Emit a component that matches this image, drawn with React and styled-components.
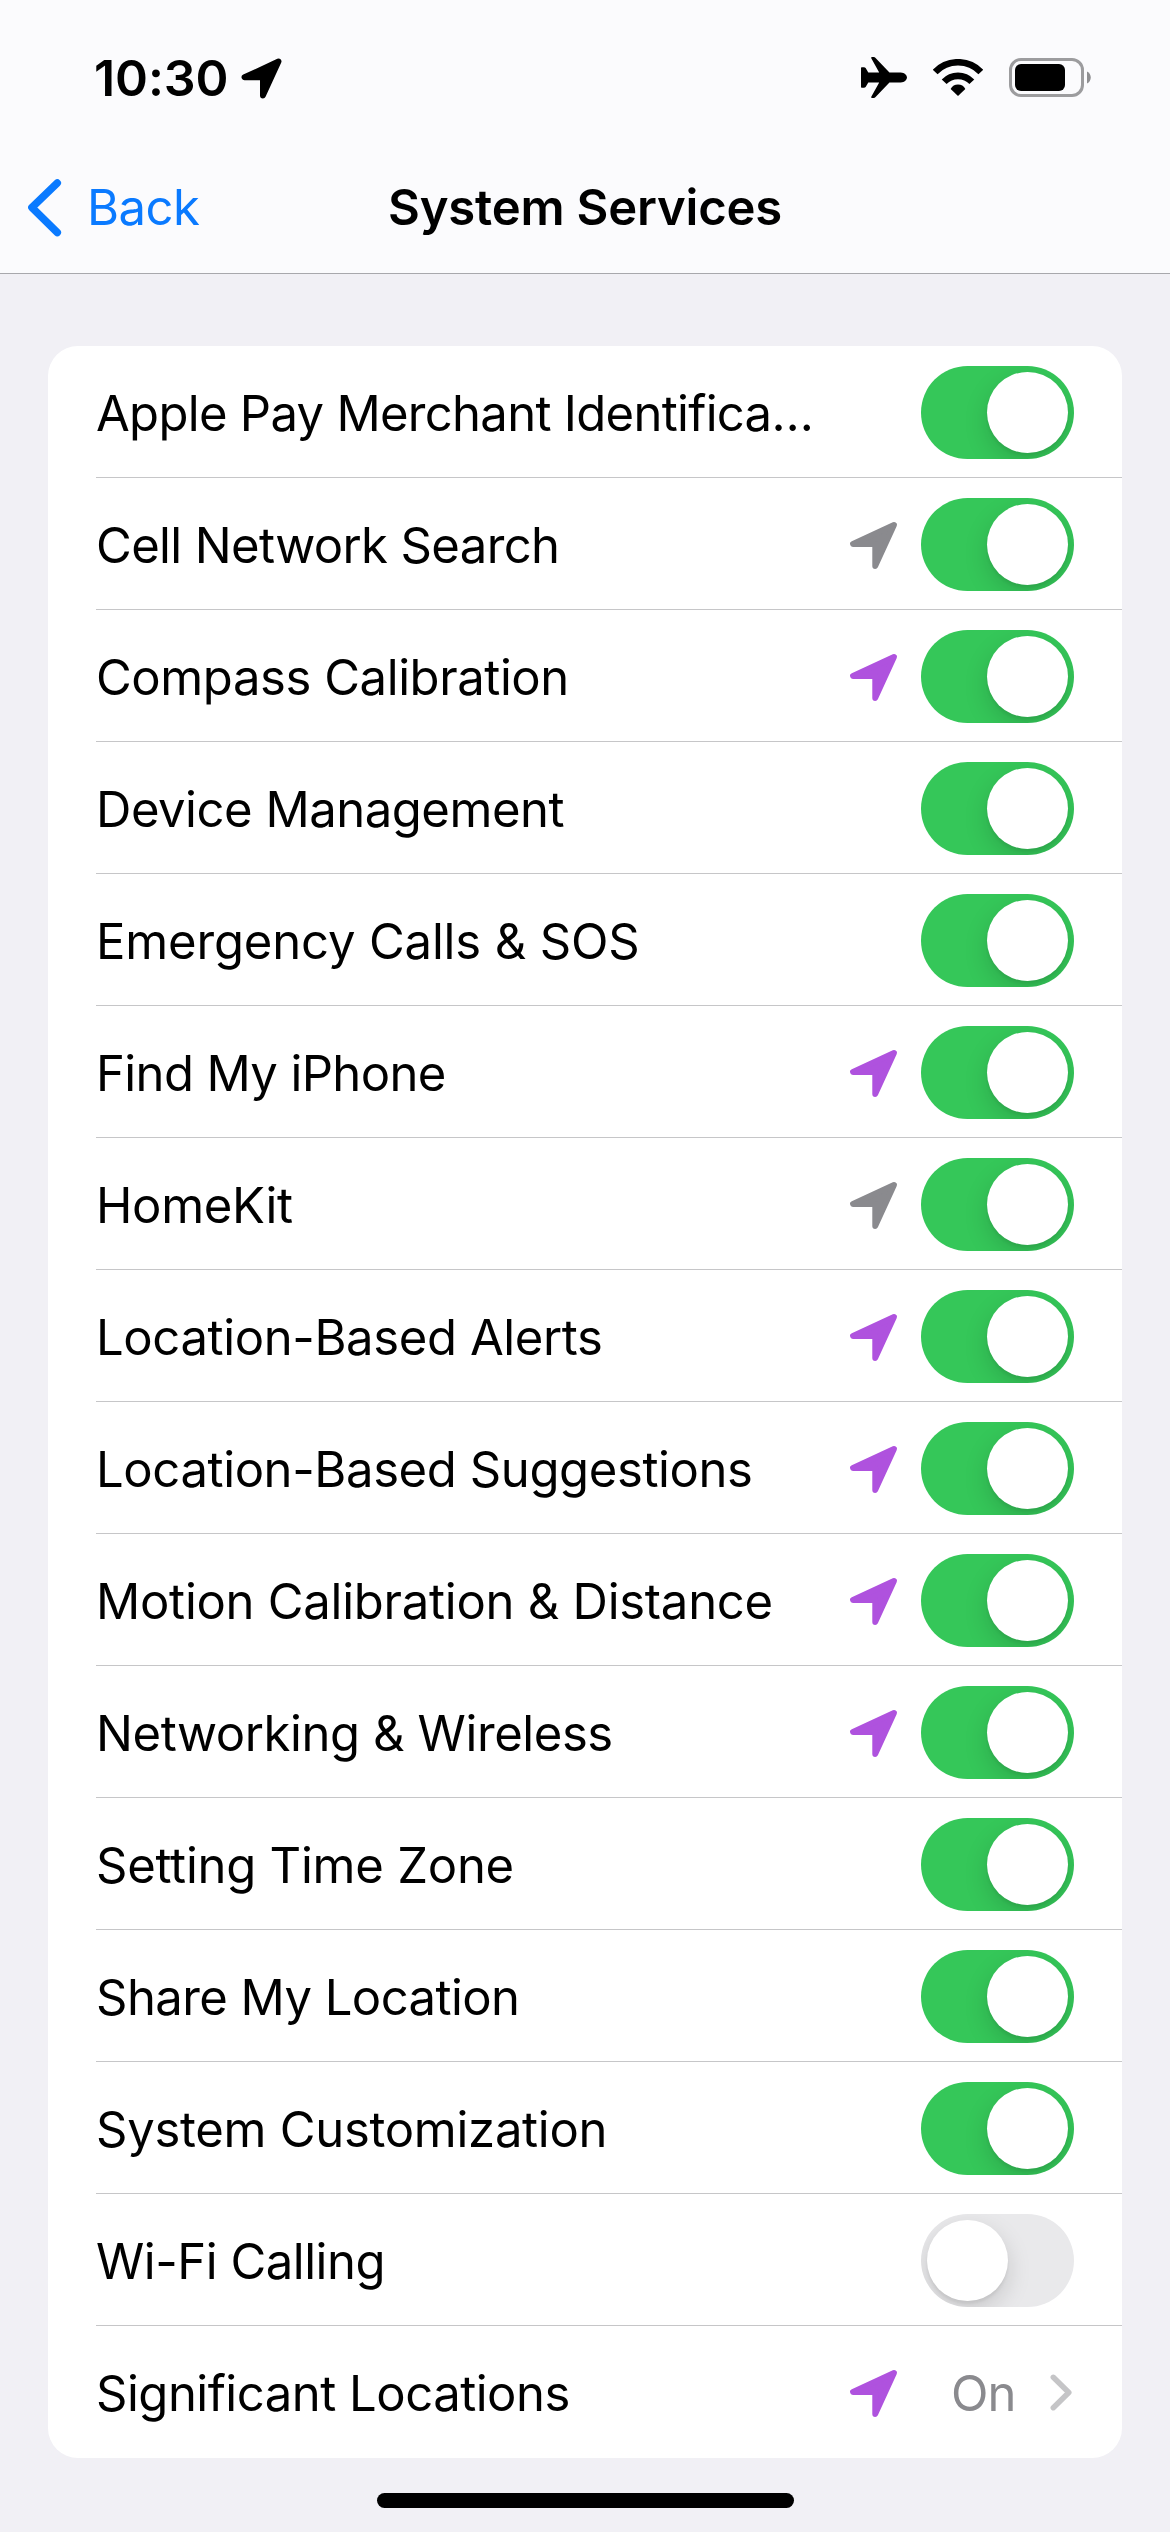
import { useState } from "react";
import styled, { createGlobalStyle } from "styled-components";

const GlobalStyle = createGlobalStyle`
    * {
        box-sizing: border-box;
    }

    body {
        margin: 0;
        background-color: #f1f0f5;
        font-family: Inter, "Liberation Sans", sans-serif;
        color: black;
    }
`;

const Screen = styled.div`
    width: 1170px;
    height: 2532px;
    display: flex;
    flex-direction: column;
    overflow: hidden;
`;

//top area: status bar + navigation bar
const Header = styled.header`
    height: 274px;
    background-color: #fbfbfd;
    border-bottom: 1px solid #a8a8ac;
`;

const StatusBar = styled.div`
    height: 141px;
    padding: 15px 79px 0 94px;
    display: flex;
    align-items: center;
    justify-content: space-between;
`;

const StatusGroup = styled.div`
    display: flex;
    align-items: center;
    gap: ${props => props.$gap}px;
`;

const StatusIcons = styled(StatusGroup)`
    padding-bottom: 1px;
`;

const Time = styled.span`
    font-size: 50px;
    font-weight: 600;
    line-height: 60px;
    letter-spacing: -0.1px;
`;

const NavBar = styled.nav`
    height: 132px;
    padding: 0 28px;
    display: grid;
    grid-template-columns: 1fr auto 1fr;
    align-items: center;
`;

const BackButton = styled.button`
    padding: 1px 0 0;
    border: none;
    background: none;
    display: flex;
    align-items: center;
    gap: 25px;
    font: inherit;
    font-size: 49px;
    line-height: 60px;
    letter-spacing: -0.5px;
    color: #0a7aff;
    cursor: pointer;
`;

const Title = styled.h1`
    margin: 0;
    padding-top: 1px;
    font-size: 49px;
    font-weight: 600;
    line-height: 60px;
    letter-spacing: -0.2px;
`;

const List = styled.ul`
    margin: 72px 48px 0;
    padding: 0;
    list-style: none;
    background-color: white;
    border-radius: 30px;
`;

const Row = styled.li`
    height: 132px;
    padding-left: 48px;
`;

const RowContent = styled.div`
    height: 100%;
    padding: 2px 48px 0 0;
    display: flex;
    align-items: center;
    border-bottom: 1px solid ${props => props.$last ? "transparent" : "#c6c6c8"};
`;

const Label = styled.span`
    flex: 1;
    padding-top: 2px;
    font-size: 49px;
    line-height: 60px;
    white-space: nowrap;
    letter-spacing: ${props => props.$spacing}px;
`;

const ArrowSlot = styled.span`
    display: flex;
    padding-top: 2px;
`;

const Toggle = styled.button`
    width: 153px;
    height: 93px;
    margin-left: 24px;
    padding: 6px;
    border: none;
    border-radius: 47px;
    overflow: hidden;
    display: flex;
    justify-content: ${props => props.$on ? "flex-end" : "flex-start"};
    background-color: ${props => props.$on ? "#35c759" : "#e9e9eb"};
    cursor: pointer;
`;

const Knob = styled.span`
    width: 81px;
    height: 81px;
    border-radius: 50%;
    background-color: white;
    box-shadow: 0 9px 24px rgba(0, 0, 0, 0.15), 0 3px 3px rgba(0, 0, 0, 0.06);
`;

//value and chevron on the right of a link row
const Detail = styled.div`
    width: 177px;
    padding: 0 2px 0 54px;
    display: flex;
    align-items: center;
    justify-content: space-between;
`;

const Value = styled.span`
    padding-top: 2px;
    color: #8a8a8e;
    font-size: 49px;
    line-height: 60px;
    letter-spacing: -1px;
`;

const HomeIndicator = styled.div`
    width: 417px;
    height: 15px;
    margin: 35px auto 0;
    border-radius: 8px;
    background-color: black;
`;


const PURPLE = "#af52de";
const GRAY = "#8a8a8e";

const services = [
    { name: "Apple Pay Merchant Identifica…", on: true, spacing: -0.7 },
    { name: "Cell Network Search", arrow: GRAY, on: true, spacing: -0.62 },
    { name: "Compass Calibration", arrow: PURPLE, on: true, spacing: -0.42 },
    { name: "Device Management", on: true, spacing: -0.47 },
    { name: "Emergency Calls & SOS", on: true, spacing: -0.16 },
    { name: "Find My iPhone", arrow: PURPLE, on: true, spacing: -0.62 },
    { name: "HomeKit", arrow: GRAY, on: true, spacing: -0.3 },
    { name: "Location-Based Alerts", arrow: PURPLE, on: true, spacing: -0.38 },
    { name: "Location-Based Suggestions", arrow: PURPLE, on: true, spacing: -0.39 },
    { name: "Motion Calibration & Distance", arrow: PURPLE, on: true, spacing: -0.26 },
    { name: "Networking & Wireless", arrow: PURPLE, on: true, spacing: -0.41 },
    { name: "Setting Time Zone", on: true, spacing: -0.24 },
    { name: "Share My Location", on: true, spacing: -0.56 },
    { name: "System Customization", on: true, spacing: -0.28 },
    { name: "Wi-Fi Calling", on: false, spacing: -0.47 },
    { name: "Significant Locations", arrow: PURPLE, detail: "On", spacing: -0.49 },
];

function LocationArrow({ color, size = 47, stroke = 5.8 }) {
    return (
        <svg width={size} height={size} viewBox="0 0 47 47" overflow="visible">
            <path
                d="M44 3 3 22H25.2V44Z"
                fill={color}
                stroke={color}
                strokeWidth={stroke}
                strokeLinejoin="round"
            />
        </svg>
    )
}

function AirplaneIcon() {
    return (
        <svg width="46" height="41" viewBox="0 0 139 124">
            <path d="M0 33q0-2 2-2h7q3 0 5 2L22 47H55L31 4q-1-4 2-4h5q4 0 6 3L86 47H120c12 0 19 9 19 15s-7 15-19 15H86L44 121q-2 3-6 3h-5q-3 0-2-4L55 77H22L14 91q-2 2-5 2H2q-2 0-2-2Z" />
        </svg>
    )
}

function WifiIcon() {
    return (
        <svg width="50" height="37" viewBox="0 0 150 111">
            <path d="M75 111 53 90A25 25 0 0 1 97 90Z" />
            <path d="M33.500 68.500A57 57 0 0 1 116.500 68.500" fill="none" stroke="black" strokeWidth="20" />
            <path d="M6.500 39A95 95 0 0 1 143.500 39" fill="none" stroke="black" strokeWidth="20" />
        </svg>
    )
}

function BatteryIcon() {
    return (
        <svg width="82" height="39" viewBox="0 0 82 39">
            <rect x="1.5" y="1.5" width="72" height="36" rx="10.5" fill="none" stroke="#9c9c9e" strokeWidth="3" />
            <rect x="6" y="6" width="50" height="27" rx="6" />
            <path d="M78 13.5c5 2 5 10 0 12Z" fill="#8f8f91" />
        </svg>
    )
}

function App() {
    const [items, setItems] = useState(services);

    const handleToggle = (name) => {
        setItems(items.map(item => item.name === name ? { ...item, on: !item.on } : item));
    }

    return (
        <Screen>
            <GlobalStyle />
            <Header>
                <StatusBar>
                    <StatusGroup $gap={14}>
                        <Time>10:30</Time>
                        <LocationArrow color="black" size={39} stroke={7} />
                    </StatusGroup>
                    <StatusIcons $gap={26}>
                        <AirplaneIcon />
                        <WifiIcon />
                        <BatteryIcon />
                    </StatusIcons>
                </StatusBar>
                <NavBar>
                    <BackButton>
                        <svg width="34" height="58" viewBox="0 0 34 58">
                            <path d="M29.300 4 3.900 28.500 29.300 53.500" fill="none" stroke="currentColor" strokeWidth="7.500" strokeLinecap="round" strokeLinejoin="round" />
                        </svg>
                        Back
                    </BackButton>
                    <Title>System Services</Title>
                </NavBar>
            </Header>
            <List>
                {items.map((item, index) => (
                    <Row key={item.name}>
                        <RowContent $last={index === items.length - 1}>
                            <Label $spacing={item.spacing}>{item.name}</Label>
                            {item.arrow && (
                                <ArrowSlot>
                                    <LocationArrow color={item.arrow} />
                                </ArrowSlot>
                            )}
                            {item.detail ? (
                                <Detail>
                                    <Value>{item.detail}</Value>
                                    <svg width="22" height="37" viewBox="0 0 22 37">
                                        <path d="M3.300 3.300 18.800 18.500 3.300 33.700" fill="none" stroke="#c5c5c7" strokeWidth="5.500" strokeLinecap="round" strokeLinejoin="round" />
                                    </svg>
                                </Detail>
                            ) : (
                                <Toggle $on={item.on} onClick={() => handleToggle(item.name)}>
                                    <Knob />
                                </Toggle>
                            )}
                        </RowContent>
                    </Row>
                ))}
            </List>
            <HomeIndicator />
        </Screen>
    )
}

export default App;
